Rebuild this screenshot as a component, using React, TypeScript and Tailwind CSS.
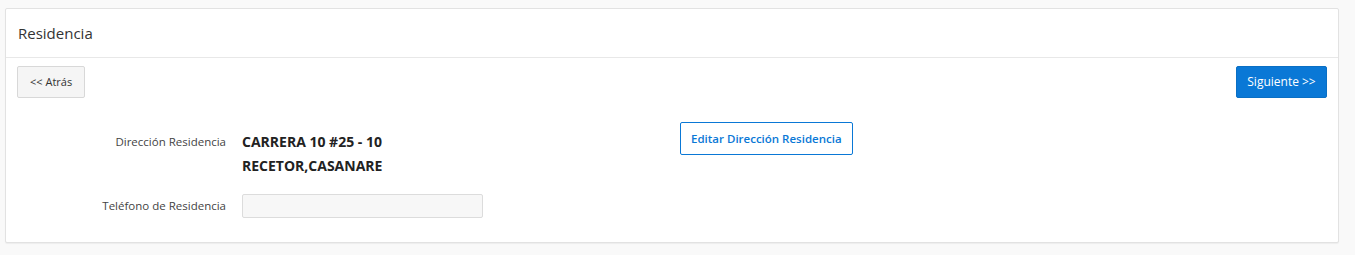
import React from "react";

function App() {
  return (
    <div
      className="min-h-[255px] w-full bg-[#f9f9f9] pt-[8px] pl-[5px] pr-[16px]"
      style={{ fontFamily: '"Open Sans", "Noto Sans", sans-serif' }}
    >
      <div className="bg-white border border-[#e2e2e2] rounded-[2px] shadow-[0_1px_1px_rgba(0,0,0,0.05)] w-[1334px]">
        {/* header */}
        <div className="h-[49px] flex items-center px-[12px] border-b border-[#e8e8e8]">
          <span className="text-[15px] text-[#333]">Residencia</span>
        </div>
        {/* nav buttons */}
        <div className="flex justify-between items-start px-[11px] pt-[8px]">
          <button className="h-[32px] px-[12px] text-[11px] text-[#333] bg-[#f5f5f5] border border-[#d8d8d8] rounded-[2px]">
            &lt;&lt; Atrás
          </button>
          <button className="h-[32px] w-[91px] text-[12px] text-white bg-[#0a78d6] border border-[#0a6fc4] rounded-[2px]">
            Siguiente &gt;&gt;
          </button>
        </div>
        {/* fields */}
        <div className="flex pt-[24px]">
          <div className="w-[220px] text-right text-[11.5px] text-[#444] pt-[11px]">
            Dirección Residencia
          </div>
          <div className="ml-[16px] w-[438px] text-[14px] font-bold text-[#222] leading-[24px] pt-[8px]">
            <div>CARRERA 10 #25 - 10</div>
            <div>RECETOR,CASANARE</div>
          </div>
          <div>
            <button className="h-[33px] px-[10px] text-[11.5px] font-semibold text-[#0a78d6] bg-white border border-[#0a78d6] rounded-[2px]">
              Editar Dirección Residencia
            </button>
          </div>
        </div>
        <div className="flex items-center pt-[16px] pb-[24px]">
          <div className="w-[220px] text-right text-[11.5px] text-[#444]">
            Teléfono de Residencia
          </div>
          <input
            type="text"
            className="ml-[16px] w-[241px] h-[24px] bg-[#f7f7f7] border border-[#dcdcdc] rounded-[2px] focus:outline-none"
          />
        </div>
      </div>
    </div>
  );
}

export default App;
